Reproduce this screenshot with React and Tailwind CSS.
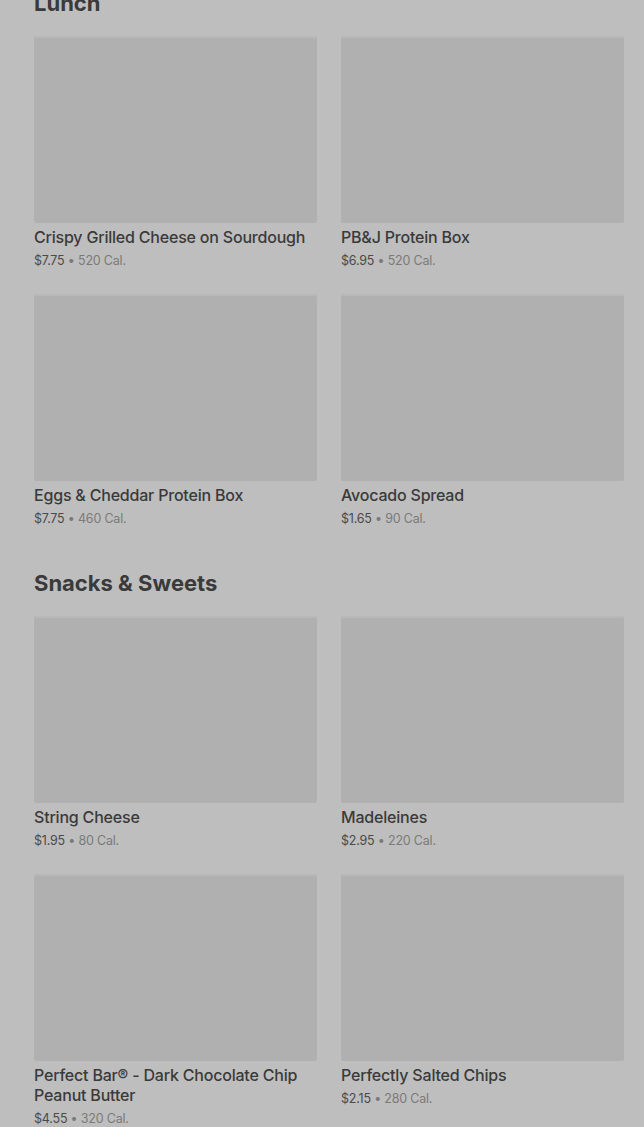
import React from "react";

const sections = [
  {
    title: "Lunch",
    items: [
      { name: "Crispy Grilled Cheese on Sourdough", price: "$7.75", cal: "520 Cal." },
      { name: "PB&J Protein Box", price: "$6.95", cal: "520 Cal." },
      { name: "Eggs & Cheddar Protein Box", price: "$7.75", cal: "460 Cal." },
      { name: "Avocado Spread", price: "$1.65", cal: "90 Cal." },
    ],
  },
  {
    title: "Snacks & Sweets",
    items: [
      { name: "String Cheese", price: "$1.95", cal: "80 Cal." },
      { name: "Madeleines", price: "$2.95", cal: "220 Cal." },
      { name: "Perfect Bar® - Dark Chocolate Chip Peanut Butter", price: "$4.55", cal: "320 Cal." },
      { name: "Perfectly Salted Chips", price: "$2.15", cal: "280 Cal." },
    ],
  },
];

function Item({ item }) {
  return (
    <div className="flex flex-col">
      <div className="h-[187px] rounded-[2px] bg-[#b0b0b0] shadow-[inset_0_2px_0_#b8b8b8]" />
      <div className="mt-[4px] text-[16px] leading-[20px] font-medium tracking-[-0.2px] text-[#3a3a3a]">{item.name}</div>
      <div className="mt-[5px] text-[12.5px] leading-[18px] tracking-[-0.2px]">
        <span className="text-[#4a4a4a]">{item.price}</span>
        <span className="text-[#7a7a7a]"> • {item.cal}</span>
      </div>
    </div>
  );
}

export default function App() {
  return (
    <div
      className="h-[1127px] overflow-hidden bg-[#bebebe] pl-[34px] pr-[20px]"
      style={{ fontFamily: "Inter, 'Noto Sans', sans-serif" }}
    >
      <div className="mt-[-11px] flex flex-col gap-[41px]">
        {sections.map((s) => (
          <section key={s.title}>
            <h2 className="mb-[19px] text-[22px] leading-[28px] font-bold text-[#3a3a3a]">{s.title}</h2>
            <div className="grid grid-cols-2 gap-x-[24px] gap-y-[24px]">
              {s.items.map((it) => (
                <Item key={it.name} item={it} />
              ))}
            </div>
          </section>
        ))}
      </div>
    </div>
  );
}
